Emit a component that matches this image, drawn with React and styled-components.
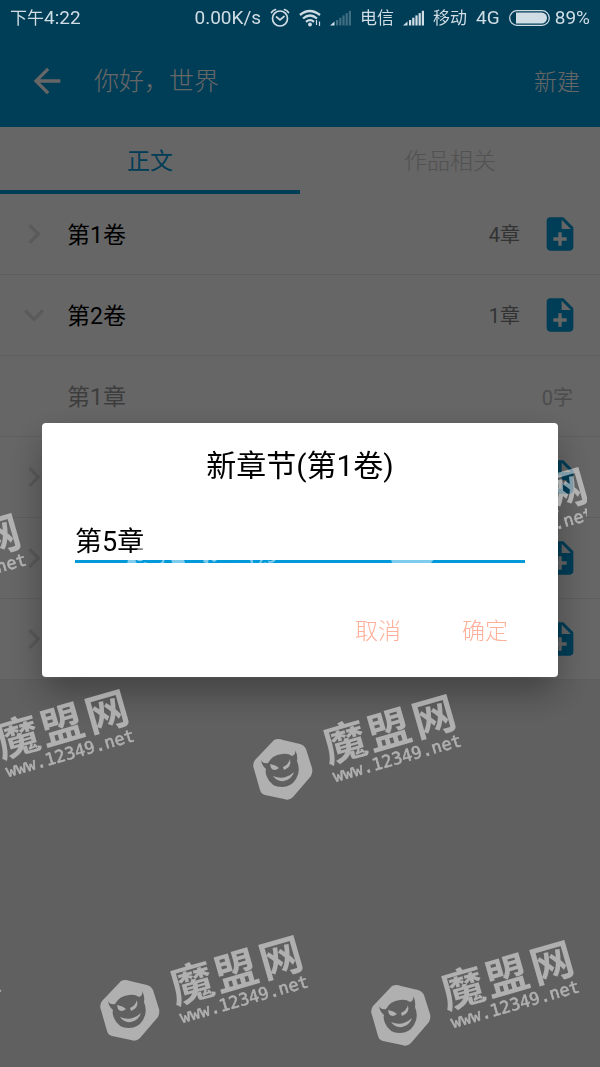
import { useState } from 'react'
import styled, { createGlobalStyle } from 'styled-components'
import { MdArrowBack, MdChevronRight, MdExpandMore, MdNoteAdd } from 'react-icons/md'

const GlobalStyle = createGlobalStyle`
* {
  box-sizing: border-box;
}
body {
  margin: 0;
  background-color: #f0f0f0;
  font-family: Roboto, "Noto Sans CJK SC", sans-serif;
}
button, input {
  font-family: inherit;
}
`

const Page = styled.div`
min-height: 100vh;
background-color: #f0f0f0;
`

const Top = styled.header`
background-color: #0099d9;
`

const StatusBar = styled.div`
position: relative;
z-index: 2;
display: flex;
align-items: center;
justify-content: space-between;
height: 35px;
padding: 0 10px;
color: #d0dde4;
font-size: 19px;
line-height: 24px;
`

const StatusGroup = styled.div`
display: flex;
align-items: center;
gap: 9px;
`

const Small = styled.span`
font-size: 17px;
`

const Battery = styled.span`
display: flex;
align-items: center;
gap: 5px;
`

const AppBar = styled.div`
display: flex;
align-items: center;
height: 92px;
padding: 0 20px 0 27px;
color: white;
`

const IconButton = styled.button`
display: flex;
flex-shrink: 0;
padding: 0;
border: none;
background: none;
color: ${props => props.$color || 'inherit'};
cursor: pointer;
svg {
  width: 40px;
  height: 40px;
}
`

const PageTitle = styled.h1`
flex: 1;
margin: 0 0 0 27px;
padding-top: 2px;
font-size: 25px;
font-weight: 300;
line-height: 36px;
`

const NewButton = styled.button`
padding: 0 0 2px;
border: none;
background: none;
color: white;
font-size: 23px;
font-weight: 300;
cursor: pointer;
`

const Tabs = styled.div`
display: flex;
background-color: white;
`

const Tab = styled.button`
flex: 1;
height: 67px;
padding: 1px 0 0;
border: none;
border-bottom: 4px solid ${props => props.$active ? '#0099d9' : 'transparent'};
background: none;
color: ${props => props.$active ? '#0099d9' : '#cdcdcd'};
font-size: 23px;
font-weight: ${props => props.$active ? 400 : 300};
cursor: pointer;
`

const List = styled.ul`
margin: 0;
padding: 0;
list-style: none;
background-color: white;
`

const Row = styled.li`
display: flex;
align-items: center;
gap: 13px;
height: 81px;
padding: 0 20px 0 14px;
border-bottom: 1px solid #ebebeb;
`

const ChapterRow = styled(Row)`
padding: 0 27px 0 67px;
`

const Name = styled.span`
flex: 1;
padding-bottom: 2px;
color: ${props => props.$muted ? '#999999' : 'black'};
font-size: 23px;
`

const Count = styled.span`
margin-right: 7px;
padding-bottom: 1px;
color: #808080;
font-size: 20px;
`

const Words = styled.span`
color: #bebebe;
font-size: 20px;
`

const Scrim = styled.div`
position: fixed;
inset: 0;
z-index: 1;
display: flex;
align-items: center;
padding: 33px 42px 0;
background-color: rgba(0, 0, 0, 0.6);
`

const Dialog = styled.form`
flex: 1;
padding: 25px 33px 23px;
border-radius: 4px;
background-color: white;
box-shadow: 0 16px 36px rgba(0, 0, 0, 0.32);
`

const DialogTitle = styled.h2`
margin: 0;
color: black;
font-size: 30px;
font-weight: 400;
line-height: 36px;
text-align: center;
`

const ChapterInput = styled.input`
display: block;
width: 100%;
height: 47px;
margin-top: 32px;
padding: 2px 0 0;
border: none;
border-bottom: 3px solid #0099d9;
background: none;
color: black;
font-size: 27px;
outline: none;
`

const Actions = styled.div`
display: flex;
justify-content: flex-end;
gap: 29px;
margin-top: 45px;
padding-right: 1px;
`

const ActionButton = styled.button`
height: 46px;
padding: 0 16px 4px;
border: none;
background: none;
color: #ffb09a;
font-size: 23px;
font-weight: 300;
cursor: pointer;
`

const MarkLayer = styled.div`
position: fixed;
inset: 0;
z-index: 3;
overflow: hidden;
pointer-events: none;
`

const MarkSvg = styled.svg`
position: absolute;
left: ${props => props.$x - 32}px;
top: ${props => props.$y - 80}px;
`

const AlarmIcon = () => (
  <svg width="20" height="20" viewBox="0 0 20 20" fill="none" stroke="currentColor" strokeWidth="1.7" strokeLinecap="round">
    <circle cx="10" cy="10.500" r="7.500" />
    <path d="M6.500 9 L10 12 L14 8.500" />
    <path d="M1.500 4.500 Q3 2.300 5.500 1.500 M14.500 1.500 Q17 2.300 18.500 4.500" />
  </svg>
)

const WifiIcon = () => (
  <svg width="22" height="18" viewBox="0 0 22 18" fill="none" stroke="currentColor" strokeWidth="2.3">
    <path d="M1 6 Q10.500 -2 21 6" />
    <path d="M4 9.500 Q11 3.500 18 9.500" />
    <path d="M7 12.800 Q11 9.500 15 12.800" />
    <circle cx="11" cy="15.500" r="1.900" fill="currentColor" stroke="none" />
    <path d="M17.500 11v5 M20.500 12.500v4.500" strokeWidth="1.200" />
  </svg>
)

const SignalIcon = ({ bars }) => (
  <svg width="21" height="16" viewBox="0 0 21 16" fill="currentColor">
    <path d="M0 15.500 L4.500 11.500 V15.500Z" />
    {[0, 1, 2, 3, 4].map(i => (
      <rect key={i} x={6 + i * 3.2} y={10 - i * 2.3} width="2.200" height={5.5 + i * 2.3} opacity={i < bars ? 1 : 0.3} />
    ))}
  </svg>
)

const BatteryIcon = () => (
  <svg width="41" height="16" viewBox="0 0 41 16">
    <rect x="0.700" y="0.700" width="39.600" height="14.600" rx="7.300" fill="none" stroke="currentColor" strokeWidth="1.300" />
    <path d="M7 2.500 H32.500 A5.500 5.500 0 0 1 32.500 13.500 H7Z" fill="currentColor" />
  </svg>
)

const Watermark = ({ x, y, width = 214 }) => (
  <MarkSvg $x={x} $y={y} width={width} height="120" viewBox={`-32 -80 ${width} 120`} aria-hidden="true">
    <g fill="white" opacity="0.5">
      <path
        fillRule="evenodd"
        d="M-9 -29 Q-5 -31 0 -29 L17 -25 Q21 -24 23 -20 L29 -1 Q30 3 28 7 L10 28 Q6 32 1 30 L-18 26 Q-22 25 -23 21 L-29 0 Q-31 -5 -28 -9Z
        M-22 -9 Q-20 -5 -15 -6 Q-11 -14 -1 -15 Q5 -16 9 -13 Q13 -14 12 -19 Q15 -14 14 -8 Q18 2 13 10 Q8 18 -1 18 Q-12 18 -16 8 Q-18 4 -17 0 Q-21 -3 -22 -9Z"
      />
      <path d="M-13 -5 Q-7 -4 -4 -1 Q-9 3 -12 -1Z M0 -2 Q6 -5 7 -10 Q9 -2 1 1Z" />
      <path d="M-10 7 Q1 12 11 3 Q9 10 1 12 Q-6 13 -10 7Z" />
      <g transform="rotate(-16)" fontFamily="'Noto Sans CJK SC', sans-serif" fontSize="43" fontWeight="700">
        <text x="45" y="7">魔</text>
        <text x="91" y="7">盟</text>
        <text x="138" y="7">网</text>
        <text x="46" y="27" fontFamily="'DejaVu Sans Mono', monospace" fontSize="17" fontWeight="400" stroke="white" strokeWidth="0.500">www.12349.net</text>
      </g>
    </g>
  </MarkSvg>
)

const marks = [
  { x: 415, y: 542, width: 204 },
  { x: -152, y: 588 },
  { x: 157, y: 567 },
  { x: 283, y: 769 },
  { x: -44, y: 764 },
  { x: 130, y: 1010 },
  { x: 401, y: 1015 },
  { x: -177, y: 1014 },
]

const Volume = ({ name, count, open }) => (
  <Row>
    <IconButton $color="#e0e0e0" aria-label={open ? '收起' : '展开'}>
      {open ? <MdExpandMore /> : <MdChevronRight />}
    </IconButton>
    <Name>{name}</Name>
    {count && <Count>{count}章</Count>}
    <IconButton $color="#0099d9" aria-label="新章节">
      <MdNoteAdd />
    </IconButton>
  </Row>
)

const App = () => {
  const [chapter, setChapter] = useState('第5章')
  const [tab, setTab] = useState(0)

  return (
    <Page>
      <GlobalStyle />
      <Top>
        <StatusBar>
          <span><Small>下午</Small>4:22</span>
          <StatusGroup>
            <span>0.00K/s</span>
            <AlarmIcon />
            <WifiIcon />
            <SignalIcon bars={0} />
            <Small>电信</Small>
            <SignalIcon bars={5} />
            <Small>移动</Small>
            <span>4G</span>
            <Battery>
              <BatteryIcon />
              <span>89%</span>
            </Battery>
          </StatusGroup>
        </StatusBar>
        <AppBar>
          <IconButton aria-label="返回"><MdArrowBack /></IconButton>
          <PageTitle>你好，世界</PageTitle>
          <NewButton>新建</NewButton>
        </AppBar>
      </Top>

      <Tabs role="tablist">
        <Tab role="tab" aria-selected={tab === 0} $active={tab === 0} onClick={() => setTab(0)}>正文</Tab>
        <Tab role="tab" aria-selected={tab === 1} $active={tab === 1} onClick={() => setTab(1)}>作品相关</Tab>
      </Tabs>

      <List>
        <Volume name="第1卷" count={4} />
        <Volume name="第2卷" count={1} open />
        <ChapterRow>
          <Name $muted>第1章</Name>
          <Words>0字</Words>
        </ChapterRow>
        <Volume />
        <Volume />
        <Volume />
      </List>

      <Scrim>
        <Dialog role="dialog" aria-labelledby="dialog-title" onSubmit={e => e.preventDefault()}>
          <DialogTitle id="dialog-title">新章节(第1卷)</DialogTitle>
          <ChapterInput aria-labelledby="dialog-title" value={chapter} onChange={e => setChapter(e.target.value)} />
          <Actions>
            <ActionButton type="button">取消</ActionButton>
            <ActionButton type="submit">确定</ActionButton>
          </Actions>
        </Dialog>
      </Scrim>

      <MarkLayer>
        {marks.map((mark, i) => <Watermark key={i} {...mark} />)}
      </MarkLayer>
    </Page>
  )
}

export default App
